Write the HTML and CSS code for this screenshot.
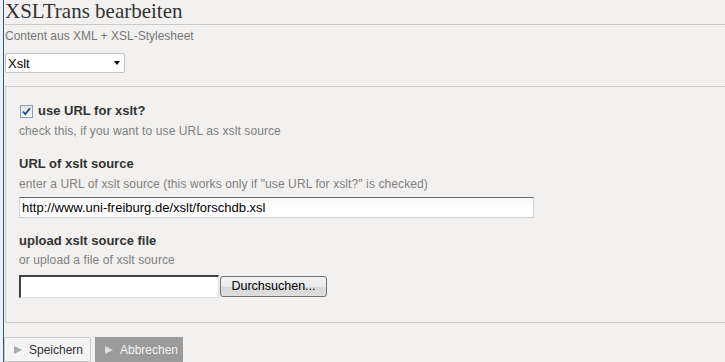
FILE: index.html
```html
<html>
  <head>
    <meta charset="UTF-8" />
    <title>XSLTrans bearbeiten</title>
    <link rel="stylesheet" href="styles.css">
  </head>
  <body>
    <div class="page">
      <h1 class="title">XSLTrans bearbeiten</h1>
      <p class="subtitle">Content aus XML + XSL-Stylesheet</p>
      <div class="select_wrap">
        <select class="select">
          <option>Xslt</option>
        </select>
        <span class="select_arrow"></span>
      </div>

      <div class="box">
        <div class="field">
          <label class="check_row">
            <span class="checkbox">
              <svg width="9" height="9" viewBox="0 0 9 9"><path d="M1 4.5 L3.3 7 L8 1.2" fill="none" stroke="#2340a8" stroke-width="1.8"/></svg>
            </span>
            <span class="label">use URL for xslt?</span>
          </label>
          <p class="hint">check this, if you want to use URL as xslt source</p>
        </div>

        <div class="field field_url">
          <p class="label">URL of xslt source</p>
          <p class="hint">enter a URL of xslt source (this works only if "use URL for xslt?" is checked)</p>
          <input class="text" type="text" value="http://www.uni-freiburg.de/xslt/forschdb.xsl" />
        </div>

        <div class="field field_upload">
          <p class="label">upload xslt source file</p>
          <p class="hint hint_upload">or upload a file of xslt source</p>
          <div class="file_row">
            <span class="file_box"></span>
            <span class="file_btn">Durchsuchen...</span>
          </div>
        </div>
      </div>

      <div class="actions">
        <span class="btn btn_save"><i class="arrow"></i>Speichern</span>
        <span class="btn btn_cancel"><i class="arrow"></i>Abbrechen</span>
      </div>
    </div>
  </body>
</html>
```

FILE: styles.css
```css
* {
  margin: 0;
  padding: 0;
  box-sizing: border-box;
}
body {
  font-family: "Liberation Sans", Arial, sans-serif;
  background: #f2f1ef;
  color: #333;
  font-size: 12px;
  overflow: hidden;
}
.page {
  margin-left: 3px;
  border-left: 1px solid #1f58a8;
  min-height: 362px;
}
.title {
  margin-left: 1px;
  font-family: "Liberation Serif", "Times New Roman", serif;
  font-weight: normal;
  font-size: 21px;
  line-height: 22px;
  color: #333;
  padding-bottom: 2px;
  border-bottom: 1px solid #c9c9c9;
}
.subtitle {
  margin: 3px 0 0 1px;
  line-height: 16px;
  color: #777;
}
.select_wrap {
  position: relative;
  width: 120px;
  height: 20px;
  margin: 9px 0 0 1px;
}
.select {
  -webkit-appearance: none;
  appearance: none;
  width: 120px;
  height: 20px;
  border: 1px solid #c4c4c4;
  border-radius: 2px;
  background: #fff;
  font-family: "Liberation Sans", Arial, sans-serif;
  font-size: 13px;
  color: #000;
  padding-left: 2px;
  outline: 0;
}
.select_arrow {
  position: absolute;
  left: 109px;
  top: 8px;
  width: 0;
  height: 0;
  border-left: 3.5px solid transparent;
  border-right: 3.5px solid transparent;
  border-top: 4px solid #000;
}
.box {
  margin: 13px 0 0 1px;
  border: 1px solid #cbcbcb;
  border-right: none;
  padding: 16px 0 24px 13px;
}
.label {
  font-size: 13px;
  font-weight: bold;
  line-height: 16px;
  color: #333;
}
.hint {
  margin-top: 4px;
  line-height: 16px;
  letter-spacing: 0.1px;
  color: #808080;
}
.check_row {
  display: flex;
  align-items: center;
  height: 16px;
}
.checkbox {
  display: flex;
  align-items: center;
  justify-content: center;
  width: 13px;
  height: 13px;
  margin: 0 5px 0 1px;
  border: 1px solid #8aa0b8;
  background: linear-gradient(#e4e4e0, #fbfbf9);
}
.field_url {
  margin-top: 17px;
}
.text {
  display: block;
  margin-top: 5px;
  width: 515px;
  height: 21px;
  border: 1px solid #d2d2d2;
  border-top-color: #6b6b6b;
  background: linear-gradient(#f6f6f6, #fff 40%);
  font-family: "Liberation Sans", Arial, sans-serif;
  font-size: 13px;
  color: #000;
  padding-left: 2px;
  outline: 0;
}
.field_upload {
  margin-top: 15px;
}
.hint_upload {
  margin-top: 3px;
}
.file_row {
  display: flex;
  align-items: flex-start;
  margin-top: 7px;
}
.file_box {
  width: 200px;
  height: 23px;
  background: #fff;
  border-top: 2px solid #404040;
  border-left: 2px solid #404040;
  border-right: 1px solid #e0e0e0;
  border-bottom: 1px solid #e0e0e0;
}
.file_btn {
  margin: 1px 0 0 1px;
  width: 107px;
  height: 21px;
  line-height: 19px;
  text-align: center;
  border: 1px solid #707070;
  border-radius: 3px;
  background: linear-gradient(#f3f3f3 0%, #e8e8e8 50%, #d8d8d8 51%, #dedede 100%);
  font-size: 12.5px;
  color: #000;
}
.actions {
  display: flex;
  margin-top: 14px;
}
.btn {
  display: flex;
  align-items: center;
  height: 25px;
  line-height: 16px;
  font-size: 12px;
  border: 1px solid #c9c9c9;
}
.btn_save {
  width: 87px;
  padding-left: 9px;
  background: #f4f4f4;
  color: #333;
}
.btn_cancel {
  width: 88px;
  margin-left: 4px;
  padding-left: 9px;
  background: #9b9b9b;
  border-color: #9b9b9b;
  color: #f2f2f2;
}
.arrow {
  width: 0;
  height: 0;
  margin-right: 7px;
  border-top: 4px solid transparent;
  border-bottom: 4px solid transparent;
  border-left: 8px solid #aaa;
}
.btn_cancel .arrow {
  border-left-color: #dedede;
}
```
